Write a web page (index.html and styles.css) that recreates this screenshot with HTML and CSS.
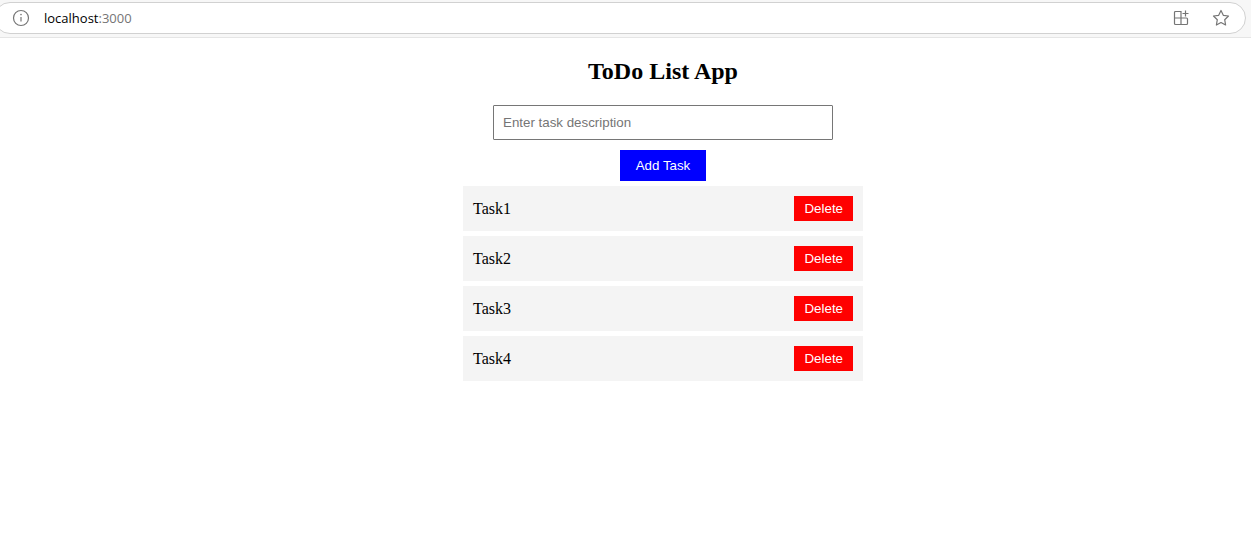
FILE: index.html
```html
<!DOCTYPE html>
<html lang="en">
<head>
<meta charset="utf-8">
<title>ToDo List App</title>
<link rel="stylesheet" href="styles.css">
</head>
<body>
<header class="toolbar">
  <div class="address-bar">
    <button class="icon-button" type="button" aria-label="Site information">
      <svg width="18" height="18" viewBox="0 0 18 18" fill="none" stroke="#757575" stroke-width="1.2"><circle cx="9" cy="9" r="7.5"/><path d="M9 8v4.6"/><circle cx="9" cy="5.6" r=".8" fill="#757575" stroke="none"/></svg>
    </button>
    <span class="url">localhost<span class="port">:3000</span></span>
    <button class="icon-button" type="button" aria-label="Install app">
      <svg width="18" height="18" viewBox="0 0 18 18" fill="none" stroke="#757575" stroke-width="1.2"><path d="M9 9V2.5H3.5a1 1 0 0 0-1 1v11a1 1 0 0 0 1 1h11a1 1 0 0 0 1-1V10a1 1 0 0 0-1-1h-12M9 9v6.5M13.5 1.5v6M10.5 4.5h6"/></svg>
    </button>
    <button class="icon-button" type="button" aria-label="Add to favorites">
      <svg width="18" height="18" viewBox="0 0 18 18" fill="none" stroke="#757575" stroke-width="1.2" stroke-linejoin="round"><path d="M9 1.5l2.3 4.8 5.2.7-3.8 3.7.9 5.3L9 13.5 4.4 16l.9-5.3L1.5 7l5.2-.7z"/></svg>
    </button>
  </div>
</header>
<main class="app">
  <h2 class="title">ToDo List App</h2>
  <form class="task-form">
    <input class="task-input" type="text" placeholder="Enter task description" aria-label="Task description">
    <button class="add-button" type="button">Add Task</button>
  </form>
  <ul class="task-list">
    <li class="task"><span>Task1</span><button class="delete-button" type="button">Delete</button></li>
    <li class="task"><span>Task2</span><button class="delete-button" type="button">Delete</button></li>
    <li class="task"><span>Task3</span><button class="delete-button" type="button">Delete</button></li>
    <li class="task"><span>Task4</span><button class="delete-button" type="button">Delete</button></li>
  </ul>
</main>
</body>
</html>
```
FILE: styles.css
```css
* {
  box-sizing: border-box;
}

body {
  margin: 0;
  background: #fff;
  color: #000;
  font-family: "Liberation Serif", "Times New Roman", serif;
  font-size: 16px;
}

.toolbar {
  padding: 2px 5px 3px 0;
  background: #f7f7f7;
  border-bottom: 1px solid #e5e5e5;
  overflow: hidden;
}

.address-bar {
  display: flex;
  align-items: center;
  height: 32px;
  margin-left: -6px;
  padding: 0 15px 0 17px;
  background: #fff;
  border: 1px solid #d1d1d1;
  border-radius: 16px;
}

.icon-button {
  display: flex;
  padding: 0;
  border: 0;
  background: none;
}

.icon-button + .icon-button {
  margin-left: 22px;
}

.url {
  flex: 1;
  margin-left: 14px;
  font-family: "Open Sans", "Noto Sans", sans-serif;
  font-size: 13px;
}

.port {
  color: #757575;
}

.app {
  display: flex;
  flex-direction: column;
  align-items: center;
  padding: 20px 0 20px 75px;
}

.title {
  margin: 0 0 20px;
  font-size: 24px;
  line-height: 27px;
}

.task-form {
  display: flex;
  flex-direction: column;
  align-items: center;
  gap: 10px;
}

.task-input,
.add-button,
.delete-button {
  font-family: "Liberation Sans", Arial, sans-serif;
  line-height: 15px;
}

.task-input {
  width: 340px;
  height: 35px;
  padding: 9px;
  border: 1px solid #767676;
  border-radius: 1px;
}

.task-input::placeholder {
  color: #757575;
}

.add-button {
  padding: 8px 16px;
  border: 0;
  background: #00f;
  color: #fff;
}

.delete-button {
  padding: 5px 10px;
  border: 0;
  background: #f00;
  color: #fff;
}

.task-list {
  display: flex;
  flex-direction: column;
  gap: 5px;
  width: 400px;
  margin: 5px 0 0;
  padding: 0;
  list-style: none;
}

.task {
  display: flex;
  align-items: center;
  justify-content: space-between;
  padding: 10px;
  background: #f4f4f4;
}
```
